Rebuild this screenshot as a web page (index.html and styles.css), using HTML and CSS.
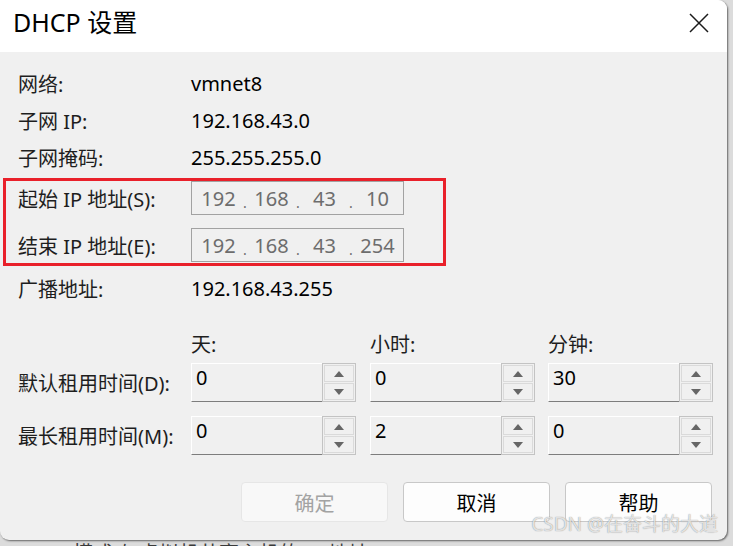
FILE: index.html
```html
<!DOCTYPE html>
<html lang="zh-CN">
<head>
    <meta charset="UTF-8">
    <title>DHCP 设置</title>
    <link rel="stylesheet" href="styles.css">
</head>
<body>
    <!-- Окно диалога -->
    <div class="window">
        <div class="titlebar">
            <span class="title">DHCP 设置</span>
            <svg class="close" width="20" height="20" viewBox="0 0 20 20">
                <path d="M1 1 L19 19 M19 1 L1 19" stroke="#1b1b1b" stroke-width="1.5" fill="none"/>
            </svg>
        </div>

        <div class="content">
            <!-- Сведения о сети -->
            <div class="row"><span class="label">网络:</span><span class="value">vmnet8</span></div>
            <div class="row"><span class="label">子网 IP:</span><span class="value">192.168.43.0</span></div>
            <div class="row"><span class="label">子网掩码:</span><span class="value">255.255.255.0</span></div>

            <!-- Диапазон адресов (выделен красным) -->
            <div class="range">
                <div class="range-row">
                    <span class="label">起始 IP 地址(S):</span>
                    <div class="ipbox">
                        <span class="oct">192</span><span class="dot">.</span>
                        <span class="oct">168</span><span class="dot">.</span>
                        <span class="oct">43</span><span class="dot">.</span>
                        <span class="oct">10</span>
                    </div>
                </div>
                <div class="range-row">
                    <span class="label">结束 IP 地址(E):</span>
                    <div class="ipbox">
                        <span class="oct">192</span><span class="dot">.</span>
                        <span class="oct">168</span><span class="dot">.</span>
                        <span class="oct">43</span><span class="dot">.</span>
                        <span class="oct">254</span>
                    </div>
                </div>
            </div>

            <div class="row row-bcast"><span class="label">广播地址:</span><span class="value">192.168.43.255</span></div>

            <!-- Время аренды -->
            <div class="lease">
                <span></span>
                <span class="head">天:</span>
                <span class="head">小时:</span>
                <span class="head">分钟:</span>

                <span class="label">默认租用时间(D):</span>
                <div class="spin"><span class="spin-field">0</span><div class="spin-btns"><span class="spin-btn"><i class="up"></i></span><span class="spin-btn"><i class="down"></i></span></div></div>
                <div class="spin"><span class="spin-field">0</span><div class="spin-btns"><span class="spin-btn"><i class="up"></i></span><span class="spin-btn"><i class="down"></i></span></div></div>
                <div class="spin"><span class="spin-field">30</span><div class="spin-btns"><span class="spin-btn"><i class="up"></i></span><span class="spin-btn"><i class="down"></i></span></div></div>

                <span class="label">最长租用时间(M):</span>
                <div class="spin"><span class="spin-field">0</span><div class="spin-btns"><span class="spin-btn"><i class="up"></i></span><span class="spin-btn"><i class="down"></i></span></div></div>
                <div class="spin"><span class="spin-field">2</span><div class="spin-btns"><span class="spin-btn"><i class="up"></i></span><span class="spin-btn"><i class="down"></i></span></div></div>
                <div class="spin"><span class="spin-field">0</span><div class="spin-btns"><span class="spin-btn"><i class="up"></i></span><span class="spin-btn"><i class="down"></i></span></div></div>
            </div>

            <!-- Кнопки -->
            <div class="actions">
                <button class="btn" disabled>确定</button>
                <button class="btn">取消</button>
                <button class="btn">帮助</button>
            </div>
        </div>

        <div class="watermark">CSDN @在奋斗的大道</div>
    </div>

    <!-- Текст окна позади -->
    <div class="behind">NAT 模式(与虚拟机共享主机的 IP 地址)(N)</div>
</body>
</html>
```

FILE: styles.css
```css
/* Фон за окном */
html, body {
    margin: 0;
    background: #dcdcdc;
    overflow: hidden;
}

body {
    font-family: "Noto Sans", "Noto Sans CJK SC", sans-serif;
    font-size: 20px;
    color: #000;
}

/* Окно */
.window {
    position: relative;
    width: 727px;
    height: 540px;
    background: #f0f0f0;
    border-radius: 0 9px 9px 9px;
    box-shadow: 1px 1px 2px rgba(0, 0, 0, 0.55);
    overflow: hidden;
}

.titlebar {
    height: 52px;
    box-sizing: border-box;
    background: #fff;
    display: flex;
    justify-content: space-between;
    align-items: flex-start;
    padding: 6px 18px 0 13px;
}

.title {
    font-size: 25px;
    line-height: 32px;
    color: #000;
}

.close {
    margin-top: 7px;
}

/* Основная область */
.content {
    padding: 13px 0 0 18px;
}

.row {
    display: flex;
    align-items: center;
    height: 37px;
}

.label {
    width: 173px;
    flex: none;
    color: #1e1e1e;
    white-space: nowrap;
}

.value {
    color: #000;
}

/* Красная рамка */
.range {
    box-sizing: border-box;
    width: 443px;
    margin: 2px 0 0 -15px;
    padding: 0 0 1px 12px;
    border: 3px solid #e9202a;
    display: flex;
    flex-direction: column;
    gap: 13px;
}

.range-row {
    display: flex;
    align-items: center;
    height: 34px;
}

.ipbox {
    box-sizing: border-box;
    width: 213px;
    height: 34px;
    border: 1px solid #a2a2a2;
    display: flex;
    align-items: center;
    padding-left: 2px;
    color: #6d6d6d;
}

.oct {
    width: 49px;
    text-align: center;
}

.dot {
    width: 4px;
    font-size: 14px;
    text-align: center;
    padding-top: 8px;
}

.row-bcast {
    margin-top: 4px;
}

/* Сетка времени аренды */
.lease {
    display: grid;
    grid-template-columns: 173px 179px 178px 165px;
    grid-template-rows: 8px 39px 39px;
    row-gap: 14px;
    margin-top: 34px;
    align-items: center;
}

.head {
    color: #1e1e1e;
    line-height: 20px;
}

.spin {
    width: 165px;
    height: 39px;
    display: flex;
}

.spin-field {
    flex: 1;
    box-sizing: border-box;
    border-top: 1px solid #fff;
    border-left: 1px solid #fff;
    border-bottom: 1px solid #7d7d7d;
    padding: 1px 4px;
    line-height: 26px;
}

.spin-btns {
    box-sizing: border-box;
    width: 34px;
    border: 1px solid #c3c3c3;
    padding: 1px;
    display: flex;
    flex-direction: column;
    gap: 1px;
}

.spin-btn {
    flex: 1;
    border: 1px solid #dadada;
    display: flex;
    align-items: center;
    justify-content: center;
}

.up, .down {
    width: 0;
    height: 0;
    border-left: 5px solid transparent;
    border-right: 5px solid transparent;
}

.up {
    border-bottom: 6px solid #666;
}

.down {
    border-top: 6px solid #666;
}

/* Кнопки */
.actions {
    display: flex;
    gap: 15px;
    margin: 27px 0 0 223px;
}

.btn {
    width: 147px;
    height: 40px;
    box-sizing: border-box;
    border: 1px solid #c8c8c8;
    border-radius: 4px;
    background: #fdfdfd;
    font-family: "Noto Sans CJK SC", sans-serif;
    font-size: 20px;
    color: #000;
    padding: 0;
}

.btn:disabled {
    background: #f8f8f8;
    border-color: #e6e6e6;
    color: #a3a3a3;
}

/* Водяной знак поверх */
.watermark {
    position: absolute;
    right: 9px;
    bottom: 3px;
    font-size: 19px;
    color: rgba(255, 255, 255, 0.75);
    text-shadow: 0 0 1px rgba(0, 0, 0, 0.5);
}

.behind {
    margin: 3px 0 0 30px;
    font-size: 20px;
    line-height: 22px;
    color: #3a3a3a;
}
```
